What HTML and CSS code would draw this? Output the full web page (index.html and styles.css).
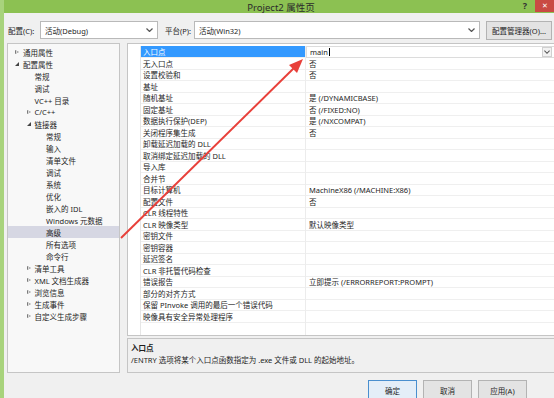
FILE: index.html
```html
<!DOCTYPE html>
<html lang="zh-CN">
  <head>
    <meta charset="UTF-8" />
    <meta name="viewport" content="width=device-width, initial-scale=1.0" />
    <title>Project2 属性页</title>
    <link rel="stylesheet" href="styles.css">
  </head>
  <body>
    <div class="window">
      <div class="titlebar">
        <span class="title">Project2 属性页</span>
        <span class="help">?</span>
        <span class="close">✕</span>
      </div>

      <div class="toolbar">
        <span class="label">配置(C):</span>
        <div class="combo combo-config">
          <span>活动(Debug)</span>
          <svg class="chevron" viewBox="0 0 7 4"><path d="M0.5 0.5 L3.5 3.5 L6.5 0.5" /></svg>
        </div>
        <span class="label label-platform">平台(P):</span>
        <div class="combo combo-platform">
          <span>活动(Win32)</span>
          <svg class="chevron" viewBox="0 0 7 4"><path d="M0.5 0.5 L3.5 3.5 L6.5 0.5" /></svg>
        </div>
        <button class="btn btn-manager">配置管理器(O)...</button>
      </div>

      <div class="main">
        <ul class="tree">
          <li class="lv0"><span class="tog closed"></span>通用属性</li>
          <li class="lv0"><span class="tog open"></span>配置属性</li>
          <li class="lv1"><span class="tog"></span>常规</li>
          <li class="lv1"><span class="tog"></span>调试</li>
          <li class="lv1"><span class="tog"></span>VC++ 目录</li>
          <li class="lv1"><span class="tog closed"></span>C/C++</li>
          <li class="lv1"><span class="tog open"></span>链接器</li>
          <li class="lv2"><span class="tog"></span>常规</li>
          <li class="lv2"><span class="tog"></span>输入</li>
          <li class="lv2"><span class="tog"></span>清单文件</li>
          <li class="lv2"><span class="tog"></span>调试</li>
          <li class="lv2"><span class="tog"></span>系统</li>
          <li class="lv2"><span class="tog"></span>优化</li>
          <li class="lv2"><span class="tog"></span>嵌入的 IDL</li>
          <li class="lv2"><span class="tog"></span>Windows 元数据</li>
          <li class="lv2 selected"><span class="tog"></span>高级</li>
          <li class="lv2"><span class="tog"></span>所有选项</li>
          <li class="lv2"><span class="tog"></span>命令行</li>
          <li class="lv1"><span class="tog closed"></span>清单工具</li>
          <li class="lv1"><span class="tog closed"></span>XML 文档生成器</li>
          <li class="lv1"><span class="tog closed"></span>浏览信息</li>
          <li class="lv1"><span class="tog closed"></span>生成事件</li>
          <li class="lv1"><span class="tog closed"></span>自定义生成步骤</li>
        </ul>

        <div class="side">
          <div class="grid">
            <div class="row active">
              <span class="gutter"></span>
              <span class="name">入口点</span>
              <span class="value edit">main<i class="caret"></i>
                <span class="drop"><svg class="chevron" viewBox="0 0 7 4"><path d="M0.5 0.5 L3.5 3.5 L6.5 0.5" /></svg></span>
              </span>
            </div>
            <div class="row"><span class="gutter"></span><span class="name">无入口点</span><span class="value">否</span></div>
            <div class="row"><span class="gutter"></span><span class="name">设置校验和</span><span class="value">否</span></div>
            <div class="row"><span class="gutter"></span><span class="name">基址</span><span class="value"></span></div>
            <div class="row"><span class="gutter"></span><span class="name">随机基址</span><span class="value">是 (/DYNAMICBASE)</span></div>
            <div class="row"><span class="gutter"></span><span class="name">固定基址</span><span class="value">否 (/FIXED:NO)</span></div>
            <div class="row"><span class="gutter"></span><span class="name">数据执行保护(DEP)</span><span class="value">是 (/NXCOMPAT)</span></div>
            <div class="row"><span class="gutter"></span><span class="name">关闭程序集生成</span><span class="value">否</span></div>
            <div class="row"><span class="gutter"></span><span class="name">卸载延迟加载的 DLL</span><span class="value"></span></div>
            <div class="row"><span class="gutter"></span><span class="name">取消绑定延迟加载的 DLL</span><span class="value"></span></div>
            <div class="row"><span class="gutter"></span><span class="name">导入库</span><span class="value"></span></div>
            <div class="row"><span class="gutter"></span><span class="name">合并节</span><span class="value"></span></div>
            <div class="row"><span class="gutter"></span><span class="name">目标计算机</span><span class="value">MachineX86 (/MACHINE:X86)</span></div>
            <div class="row"><span class="gutter"></span><span class="name">配置文件</span><span class="value">否</span></div>
            <div class="row"><span class="gutter"></span><span class="name">CLR 线程特性</span><span class="value"></span></div>
            <div class="row"><span class="gutter"></span><span class="name">CLR 映像类型</span><span class="value">默认映像类型</span></div>
            <div class="row"><span class="gutter"></span><span class="name">密钥文件</span><span class="value"></span></div>
            <div class="row"><span class="gutter"></span><span class="name">密钥容器</span><span class="value"></span></div>
            <div class="row"><span class="gutter"></span><span class="name">延迟签名</span><span class="value"></span></div>
            <div class="row"><span class="gutter"></span><span class="name">CLR 非托管代码检查</span><span class="value"></span></div>
            <div class="row"><span class="gutter"></span><span class="name">错误报告</span><span class="value">立即提示 (/ERRORREPORT:PROMPT)</span></div>
            <div class="row"><span class="gutter"></span><span class="name">部分的对齐方式</span><span class="value"></span></div>
            <div class="row"><span class="gutter"></span><span class="name">保留 PInvoke 调用的最后一个错误代码</span><span class="value"></span></div>
            <div class="row"><span class="gutter"></span><span class="name">映像具有安全异常处理程序</span><span class="value"></span></div>
            <div class="filler"><span class="gutter"></span><span class="name"></span><span class="value"></span></div>
          </div>

          <div class="desc">
            <div class="desc-title">入口点</div>
            <div class="desc-text">/ENTRY 选项将某个入口点函数指定为 .exe 文件或 DLL 的起始地址。</div>
          </div>
        </div>
      </div>

      <div class="footer">
        <button class="btn btn-default">确定</button>
        <button class="btn">取消</button>
        <button class="btn">应用(A)</button>
      </div>

      <!-- red annotation arrow drawn over the dialog -->
      <svg class="arrow" viewBox="0 0 554 398">
        <line x1="121" y1="238" x2="296" y2="66" />
        <polygon points="303,59 289,65 297,73" />
      </svg>
    </div>
  </body>
</html>
```

FILE: styles.css
```css
html,
body {
  margin: 0;
  padding: 0;
  overflow: hidden;
}

body {
  font-family: "Noto Sans", "Noto Sans CJK SC", sans-serif;
  font-size: 7.5px;
  color: #1e1e1e;
}

.window {
  position: relative;
  width: 554px;
  height: 398px;
  box-sizing: border-box;
  border-left: 4px solid #a8d37c;
  background-color: #f0f0f0;
  display: flex;
  flex-direction: column;
  overflow: hidden;
}

/* title bar */
.titlebar {
  height: 13px;
  flex-shrink: 0;
  background-color: #8cc152;
  margin-left: -4px;
  display: flex;
  align-items: center;
  justify-content: center;
  position: relative;
}

.title {
  font-size: 9.5px;
  color: #2b2b2b;
  margin-left: 8px;
}

.help {
  position: absolute;
  right: 27px;
  top: 0;
  font-size: 9px;
  font-weight: bold;
  color: #333;
  line-height: 12px;
}

.close {
  position: absolute;
  right: 0;
  top: 0;
  width: 19px;
  height: 12px;
  background-color: #c94a43;
  color: #fff;
  font-size: 7px;
  line-height: 12px;
  text-align: center;
}

/* toolbar */
.toolbar {
  display: flex;
  align-items: center;
  height: 18px;
  margin-top: 8px;
  padding-left: 4px;
}

.label {
  width: 32px;
}

.label-platform {
  margin-left: 7px;
  width: 29px;
}

.combo {
  height: 18px;
  box-sizing: border-box;
  border: 1px solid #b9b9b9;
  background-color: #fff;
  display: flex;
  align-items: center;
  justify-content: space-between;
  padding: 0 4px 0 4px;
}

.combo-config {
  width: 118px;
}

.combo-platform {
  width: 286px;
}

.chevron {
  width: 7px;
  height: 4px;
  fill: none;
  stroke: #555;
  stroke-width: 1.2;
}

.btn {
  font-family: inherit;
  font-size: 7.5px;
  color: #1e1e1e;
  background-color: #e3e3e3;
  border: 1px solid #b3b3b3;
  padding: 0;
  margin: 0;
  height: 19px;
}

.btn-manager {
  width: 66px;
  margin-left: 6px;
}

/* main area */
.main {
  display: flex;
  margin-top: 4px;
  height: 330px;
  flex-shrink: 0;
}

.tree {
  list-style: none;
  margin: 0 0 0 3px;
  padding: 2px 0 0 0;
  width: 113px;
  box-sizing: border-box;
  border: 1px solid #c5c5c5;
  background-color: #f8f8f8;
}

.tree li {
  display: flex;
  align-items: center;
  height: 12px;
  white-space: nowrap;
}

.tree .lv0 {
  padding-left: 7px;
}

.tree .lv1 {
  padding-left: 18.5px;
}

.tree .lv2 {
  padding-left: 30px;
}

.tree .selected {
  background-color: #d6d7e3;
}

.tog {
  width: 8px;
  height: 5px;
  flex-shrink: 0;
  position: relative;
}

.tog.closed::before {
  content: "";
  position: absolute;
  left: 0;
  top: 0;
  border-left: 4px solid #7a7a7a;
  border-top: 2.5px solid transparent;
  border-bottom: 2.5px solid transparent;
}

.tog.closed::after {
  content: "";
  position: absolute;
  left: 1px;
  top: 1.3px;
  border-left: 2px solid #f8f8f8;
  border-top: 1.2px solid transparent;
  border-bottom: 1.2px solid transparent;
}

.tog.open::before {
  content: "";
  position: absolute;
  left: 0;
  top: 0;
  border-right: 4px solid #444;
  border-top: 4px solid transparent;
}

.side {
  flex: 1;
  margin-left: 7px;
  margin-right: -2px;
  display: flex;
  flex-direction: column;
}

.grid {
  height: 294px;
  box-sizing: border-box;
  border: 1px solid #c5c5c5;
  background-color: #fff;
  padding-top: 2px;
  display: flex;
  flex-direction: column;
}

.row,
.filler {
  display: grid;
  grid-template-columns: 13px 165px 1fr;
  height: 11.5px;
  flex-shrink: 0;
}

.filler {
  flex: 1;
}

.row span {
  display: flex;
  align-items: center;
  white-space: nowrap;
  border-bottom: 1px solid #efefef;
  box-sizing: border-box;
}

.gutter {
  background-color: #fff;
  border-right: 1px solid #e6e6e6;
}

.row .gutter {
  border-bottom: none;
}

.name {
  padding-left: 2px;
  border-right: 1px solid #ececec;
}

.value {
  padding-left: 3px;
  position: relative;
}

.row.active .name {
  background-color: #3399ff;
  color: #fff;
}

.value.edit {
  border: 1px solid #dcdcdc;
}

.caret {
  display: inline-block;
  width: 1px;
  height: 8px;
  background-color: #000;
  margin-left: 1px;
}

.row .drop {
  position: absolute;
  right: 2px;
  top: 0;
  width: 10px;
  height: 10px;
  border: 1px solid #d0d0d0;
  background-color: #f2f2f2;
  justify-content: center;
}

.drop .chevron {
  width: 6px;
  height: 4px;
}

.desc {
  margin-top: 2px;
  height: 35px;
  box-sizing: border-box;
  border: 1px solid #c5c5c5;
  padding: 3px 0 0 3px;
  background-color: #f0f0f0;
}

.desc-title {
  font-weight: bold;
  height: 11px;
}

.desc-text {
  margin-top: 1px;
}

/* footer */
.footer {
  display: flex;
  justify-content: flex-end;
  gap: 6px;
  padding-right: 27px;
  margin-top: 7px;
}

.footer .btn {
  width: 49px;
  height: 21px;
}

.footer .btn-default {
  border-color: #4a8fcf;
  background-color: #e4eef8;
}

/* annotation */
.arrow {
  position: absolute;
  left: -4px;
  top: 0;
  width: 554px;
  height: 398px;
  pointer-events: none;
}

.arrow line {
  stroke: #e8403a;
  stroke-width: 2;
}

.arrow polygon {
  fill: #e8403a;
}
```
